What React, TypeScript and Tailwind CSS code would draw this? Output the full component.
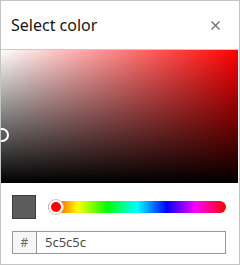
export default function App() {
  return (
    <div
      className="w-[240px] h-[265px] border border-[#c4c4c4] bg-white flex flex-col"
      style={{ fontFamily: '"Noto Sans", "Open Sans", sans-serif' }}
    >
      {/* Header */}
      <div className="h-[49px] border-b border-[#cacaca] flex items-center justify-between pl-[10px] pr-[19px] shrink-0">
        <span className="text-[16px] text-[#151515] leading-none pb-[1px]">Select color</span>
        <svg width="9" height="9" viewBox="0 0 9 9" className="text-[#6a6a6a]">
          <path d="M0.5 0.5 L8.5 8.5 M8.5 0.5 L0.5 8.5" stroke="currentColor" strokeWidth="1.2" />
        </svg>
      </div>

      {/* Saturation / value field */}
      <div className="relative w-[237px] h-[133px] shrink-0 bg-[#ff0000] overflow-hidden">
        <div className="absolute inset-0 bg-gradient-to-r from-white to-transparent" />
        <div className="absolute inset-0 bg-gradient-to-b from-transparent to-black" />
        <div className="absolute left-[-6px] top-[78px] w-[14px] h-[14px] rounded-full border-2 border-white" />
      </div>

      {/* Controls */}
      <div className="flex flex-col gap-[12px] px-[11px] pt-[12px]">
        <div className="flex items-center gap-[12px]">
          <div className="w-[24px] h-[24px] bg-[#5c5c5c] border border-[#3f3f3f]" />
          <div className="relative w-[178px] h-[12px] rounded-full bg-[linear-gradient(to_right,#ff0000,#ffff00,#00ff00,#00ffff,#0000ff,#ff00ff,#ff0000)]">
            <div className="absolute left-0 top-[-2px] w-[16px] h-[16px] rounded-full bg-white border border-[#c8c8c8] flex items-center justify-center">
              <div className="w-[10px] h-[10px] rounded-full bg-[#ff0000]" />
            </div>
          </div>
        </div>
        <div className="flex w-[214px] h-[23px] border border-[#9a9a9a]">
          <div className="w-[24px] bg-[#f6f6f6] border-r border-[#9a9a9a] flex items-center justify-center text-[12px] text-[#6a6a6a]">
            #
          </div>
          <div className="flex items-center pl-[8px] text-[13px] text-[#4a4a4a]">5c5c5c</div>
        </div>
      </div>
    </div>
  );
}
